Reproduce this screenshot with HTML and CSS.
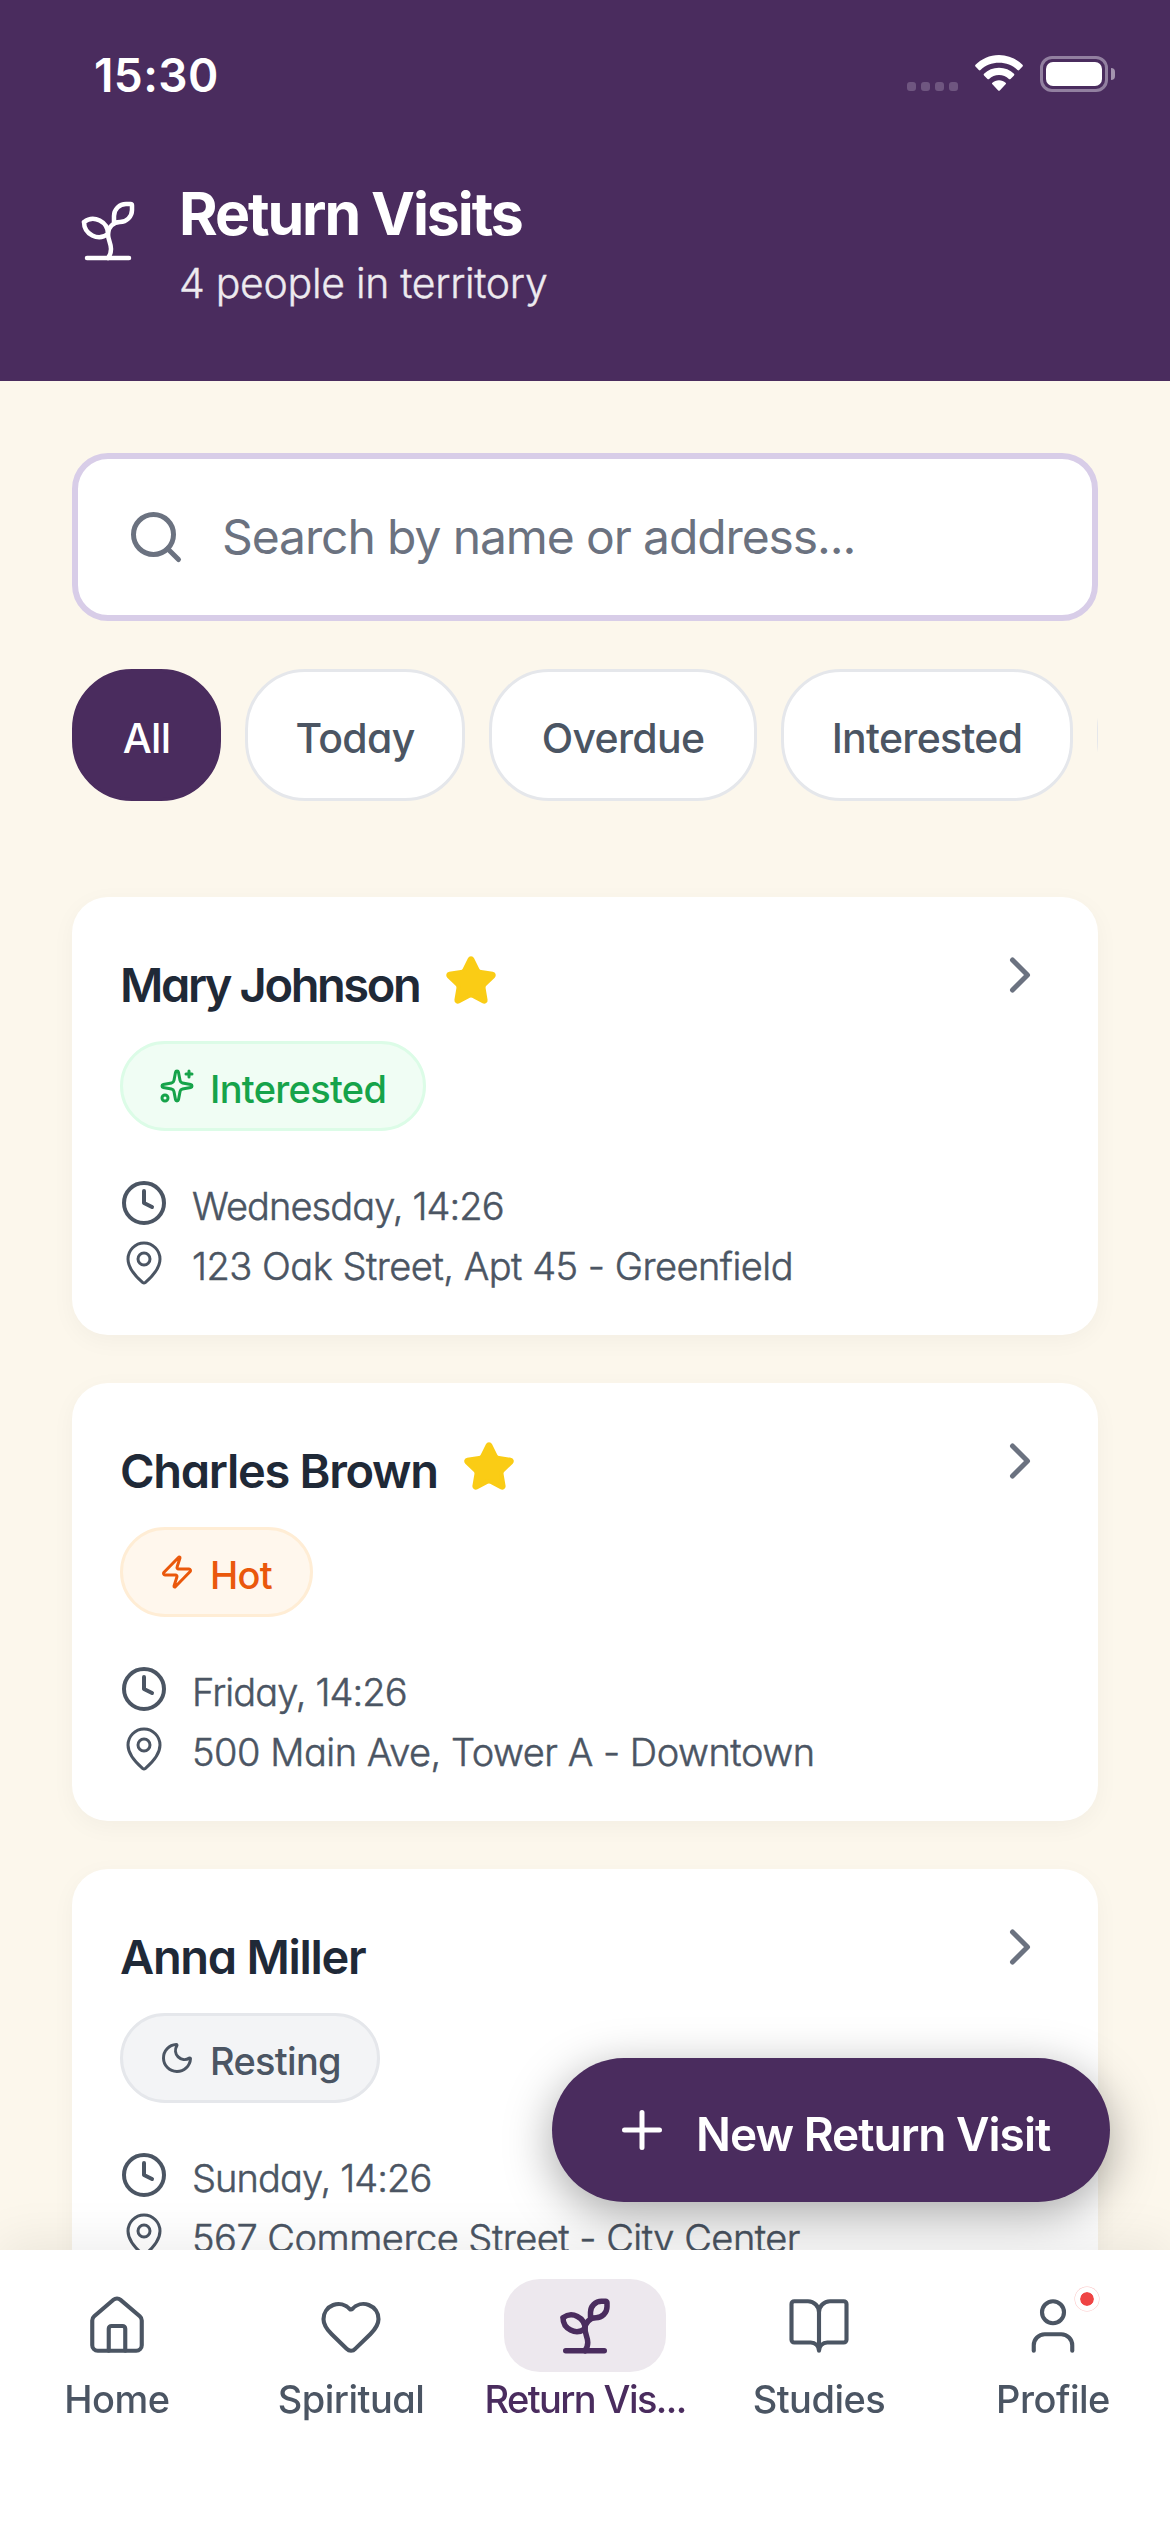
FILE: index.html
```html
<!DOCTYPE html>
<html lang="en">
<head>
    <meta charset="UTF-8">
    <title>Return Visits</title>
    <link rel="stylesheet" href="styles.css">
</head>

<body>
    <!-- icons -->
    <svg class="sprite" width="0" height="0">
        <symbol id="sprout" viewBox="0 0 24 24">
            <path d="M14 9.536V7a4 4 0 0 1 4-4h1.5a.5.5 0 0 1 .5.5V5a4 4 0 0 1-4 4 4 4 0 0 0-4 4c0 2 1 3 1 5a5 5 0 0 1-1 3" />
            <path d="M4 9a5 5 0 0 1 8 4 5 5 0 0 1-8-4M5 21h14" />
        </symbol>
        <symbol id="search" viewBox="0 0 24 24">
            <circle cx="11" cy="11" r="8" />
            <path d="m21 21-4.34-4.34" />
        </symbol>
        <symbol id="star" viewBox="0 0 24 24">
            <path d="M11.525 2.295a.53.53 0 0 1 .95 0l2.31 4.679a2.123 2.123 0 0 0 1.595 1.16l5.166.756a.53.53 0 0 1 .294.904l-3.736 3.638a2.123 2.123 0 0 0-.611 1.878l.882 5.14a.53.53 0 0 1-.771.56l-4.618-2.428a2.122 2.122 0 0 0-1.973 0L6.396 21.01a.53.53 0 0 1-.77-.56l.881-5.139a2.122 2.122 0 0 0-.611-1.879L2.16 9.795a.53.53 0 0 1 .294-.906l5.165-.755a2.122 2.122 0 0 0 1.597-1.16z" />
        </symbol>
        <symbol id="chevron" viewBox="0 0 24 24">
            <path d="m9 18 6-6-6-6" />
        </symbol>
        <symbol id="sparkles" viewBox="0 0 24 24">
            <path d="M11.017 2.814a1 1 0 0 1 1.966 0l1.051 5.558a2 2 0 0 0 1.594 1.594l5.558 1.051a1 1 0 0 1 0 1.966l-5.558 1.051a2 2 0 0 0-1.594 1.594l-1.051 5.558a1 1 0 0 1-1.966 0l-1.051-5.558a2 2 0 0 0-1.594-1.594l-5.558-1.051a1 1 0 0 1 0-1.966l5.558-1.051a2 2 0 0 0 1.594-1.594z" />
            <path d="M20 2v4M22 4h-4" />
            <circle cx="4" cy="20" r="2" />
        </symbol>
        <symbol id="zap" viewBox="0 0 24 24">
            <path d="M4 14a1 1 0 0 1-.78-1.63l9.9-10.2a.5.5 0 0 1 .86.46l-1.92 6.02A1 1 0 0 0 13 10h7a1 1 0 0 1 .78 1.63l-9.9 10.2a.5.5 0 0 1-.86-.46l1.92-6.02A1 1 0 0 0 11 14z" />
        </symbol>
        <symbol id="moon" viewBox="0 0 24 24">
            <path d="M20.985 12.486a9 9 0 1 1-9.473-9.472c.405-.022.617.46.402.803a6 6 0 0 0 8.268 8.268c.344-.215.825-.004.803.401" />
        </symbol>
        <symbol id="clock" viewBox="0 0 24 24">
            <circle cx="12" cy="12" r="10" />
            <path d="M12 6v6l4 2" />
        </symbol>
        <symbol id="pin" viewBox="0 0 24 24">
            <path d="M20 10c0 4.993-5.539 10.193-7.399 11.799a1 1 0 0 1-1.202 0C9.539 20.193 4 14.993 4 10a8 8 0 0 1 16 0" />
            <circle cx="12" cy="10" r="3" />
        </symbol>
        <symbol id="plus" viewBox="0 0 24 24">
            <path d="M5 12h14M12 5v14" />
        </symbol>
        <symbol id="home" viewBox="0 0 24 24">
            <path d="M15 21v-8a1 1 0 0 0-1-1h-4a1 1 0 0 0-1 1v8" />
            <path d="M3 10a2 2 0 0 1 .709-1.528l7-5.999a2 2 0 0 1 2.582 0l7 5.999A2 2 0 0 1 21 10v9a2 2 0 0 1-2 2H5a2 2 0 0 1-2-2z" />
        </symbol>
        <symbol id="heart" viewBox="0 0 24 24">
            <path d="M2 9.5a5.5 5.5 0 0 1 9.591-3.676.56.56 0 0 0 .818 0A5.49 5.49 0 0 1 22 9.5c0 2.29-1.5 4-3 5.5l-5.492 5.313a2 2 0 0 1-3 .019L5 15c-1.5-1.5-3-3.2-3-5.5" />
        </symbol>
        <symbol id="book" viewBox="0 0 24 24">
            <path d="M12 7v14M3 18a1 1 0 0 1-1-1V4a1 1 0 0 1 1-1h5a4 4 0 0 1 4 4 4 4 0 0 1 4-4h5a1 1 0 0 1 1 1v13a1 1 0 0 1-1 1h-6a3 3 0 0 0-3 3 3 3 0 0 0-3-3z" />
        </symbol>
        <symbol id="user" viewBox="0 0 24 24">
            <path d="M19 21v-2a4 4 0 0 0-4-4H9a4 4 0 0 0-4 4v2" />
            <circle cx="12" cy="7" r="4" />
        </symbol>
    </svg>

    <header class="header">
        <div class="status">
            <span class="time">15:30</span>
            <div class="status-icons">
                <div class="dots"><i></i><i></i><i></i><i></i></div>
                <svg class="wifi" viewBox="0 0 48 36">
                    <path d="M24 0C14.500 0 6.500 4 .5 9.800q-.8.900 0 1.800L3.800 15q.8.800 1.700 0C10.500 10.300 17 7.800 24 7.800s13.500 2.500 18.500 7.200q.9.800 1.700 0l3.300-3.400q.8-.9 0-1.800C41.500 4 33.500 0 24 0z" />
                    <path d="M24 12.800c-6 0-11 2.300-15 5.900q-.8.800 0 1.700l3.500 3.500q.8.700 1.600 0c2.700-2.400 6-3.900 9.900-3.900s7.200 1.500 9.900 3.900q.8.700 1.600 0l3.500-3.500q.8-.9 0-1.700c-4-3.600-9-5.900-15-5.900z" />
                    <path d="M24 25.300c-2.600 0-4.900 1-6.600 2.500q-.8.700 0 1.500l5.800 6.100q.8.700 1.600 0l5.800-6.100q.8-.8 0-1.500c-1.700-1.500-4-2.500-6.600-2.500z" />
                </svg>
                <div class="battery"><div class="level"></div></div>
            </div>
        </div>
        <div class="title">
            <svg class="icon"><use href="#sprout" /></svg>
            <div>
                <h1>Return Visits</h1>
                <p>4 people in territory</p>
            </div>
        </div>
    </header>

    <main class="content">
        <div class="search">
            <svg class="icon"><use href="#search" /></svg>
            <span>Search by name or address...</span>
        </div>

        <ul class="filters">
            <li class="all active">All</li>
            <li class="today">Today</li>
            <li class="overdue">Overdue</li>
            <li class="interest">Interested</li>
            <li class="more"></li>
        </ul>

        <ul class="cards">
            <li class="card">
                <div class="card-head">
                    <h2 class="mary">Mary Johnson</h2>
                    <svg class="icon star"><use href="#star" /></svg>
                    <svg class="icon chevron"><use href="#chevron" /></svg>
                </div>
                <div class="badge interested">
                    <svg class="icon"><use href="#sparkles" /></svg>
                    <span>Interested</span>
                </div>
                <div class="row date">
                    <svg class="icon"><use href="#clock" /></svg>
                    <span>Wednesday, 14:26</span>
                </div>
                <div class="row place">
                    <svg class="icon"><use href="#pin" /></svg>
                    <span>123 Oak Street, Apt 45 - Greenfield</span>
                </div>
            </li>
            <li class="card">
                <div class="card-head">
                    <h2 class="charles">Charles Brown</h2>
                    <svg class="icon star"><use href="#star" /></svg>
                    <svg class="icon chevron"><use href="#chevron" /></svg>
                </div>
                <div class="badge hot">
                    <svg class="icon"><use href="#zap" /></svg>
                    <span>Hot</span>
                </div>
                <div class="row date">
                    <svg class="icon"><use href="#clock" /></svg>
                    <span>Friday, 14:26</span>
                </div>
                <div class="row place">
                    <svg class="icon"><use href="#pin" /></svg>
                    <span>500 Main Ave, Tower A - Downtown</span>
                </div>
            </li>
            <li class="card">
                <div class="card-head">
                    <h2 class="anna">Anna Miller</h2>
                    <svg class="icon chevron"><use href="#chevron" /></svg>
                </div>
                <div class="badge resting">
                    <svg class="icon"><use href="#moon" /></svg>
                    <span>Resting</span>
                </div>
                <div class="row date">
                    <svg class="icon"><use href="#clock" /></svg>
                    <span>Sunday, 14:26</span>
                </div>
                <div class="row place">
                    <svg class="icon"><use href="#pin" /></svg>
                    <span>567 Commerce Street - City Center</span>
                </div>
            </li>
        </ul>
    </main>

    <a class="fab">
        <svg class="icon"><use href="#plus" /></svg>
        <span>New Return Visit</span>
    </a>

    <nav class="tabs">
        <a class="tab">
            <div class="pill"><svg class="icon"><use href="#home" /></svg></div>
            <span>Home</span>
        </a>
        <a class="tab">
            <div class="pill"><svg class="icon"><use href="#heart" /></svg></div>
            <span>Spiritual</span>
        </a>
        <a class="tab active">
            <div class="pill"><svg class="icon"><use href="#sprout" /></svg></div>
            <span>Return Vis...</span>
        </a>
        <a class="tab">
            <div class="pill"><svg class="icon"><use href="#book" /></svg></div>
            <span>Studies</span>
        </a>
        <a class="tab">
            <div class="pill"><svg class="icon"><use href="#user" /></svg><i class="dot"></i></div>
            <span>Profile</span>
        </a>
    </nav>
</body>

</html>
```
FILE: styles.css
```css
* {
    box-sizing: border-box;
}

body,
h1,
h2,
ul,
p {
    margin: 0;
    padding: 0;
}

ul {
    list-style: none;
}

body {
    height: 2532px;
    overflow: hidden;
    background: #fcf7ec;
    color: #4b5563;
    font-family: Inter, "Liberation Sans", sans-serif;
    /* single-storey a */
    font-feature-settings: "cv11";
    white-space: nowrap;
}

.sprite {
    position: absolute;
}

.icon {
    flex: none;
    display: block;
    fill: none;
    stroke: currentColor;
    stroke-width: 2;
    stroke-linecap: round;
    stroke-linejoin: round;
}

/* header */
.header {
    height: 381px;
    background: #4a2c5e;
    color: #fff;
}

.status {
    display: flex;
    justify-content: space-between;
    height: 176px;
    padding: 47px 55px 0 94px;
}

.time {
    font-size: 46px;
    line-height: 56px;
    font-weight: 600;
    letter-spacing: 0.4px;
}

.status-icons {
    display: flex;
    align-items: flex-start;
    padding-top: 8px;
}

.dots {
    display: flex;
    gap: 5px;
    margin: 27px 17px 0 0;
}

.dots i {
    width: 9px;
    height: 9px;
    border-radius: 3px;
    background: #6f5680;
}

.wifi {
    width: 48px;
    height: 36px;
    margin-right: 17px;
    fill: #fff;
}

.battery {
    position: relative;
    width: 68px;
    height: 36px;
    margin: 1px 7px 0 0;
    padding: 3px;
    border: 3px solid #9280a0;
    border-radius: 12px;
}

.battery::after {
    position: absolute;
    content: "";
    top: 9px;
    right: -10px;
    width: 4px;
    height: 12px;
    border-radius: 0 4px 4px 0;
    background: #a494af;
}

.level {
    height: 100%;
    border-radius: 7px;
    background: #fff;
}

.title {
    display: flex;
    gap: 35px;
    padding-left: 72px;
}

.title .icon {
    width: 72px;
    height: 72px;
    margin-top: 19px;
    stroke-width: 1.5;
}

.title h1 {
    padding-top: 2px;
    font-size: 59px;
    line-height: 72px;
    letter-spacing: -2.1px;
}

.title p {
    margin-top: 5px;
    font-size: 41px;
    line-height: 56px;
    font-weight: 300;
    letter-spacing: -0.3px;
    -webkit-text-stroke: 0.4px;
    opacity: 0.9;
}

/* search and filters */
.content {
    padding: 72px 72px 0;
}

.search {
    display: flex;
    align-items: center;
    gap: 36px;
    height: 168px;
    padding: 0 0 2px 48px;
    border: 6px solid #d8cde8;
    border-radius: 36px;
    background: #fff;
    color: #6b7280;
    font-size: 48px;
    font-feature-settings: normal;
    letter-spacing: -1.1px;
}

.search .icon {
    width: 60px;
    height: 60px;
    margin-top: 2px;
}

.filters {
    display: flex;
    gap: 24px;
    margin: 48px 0 96px;
    overflow: hidden;
}

.filters li {
    flex: none;
    height: 132px;
    padding-top: 6px;
    border: 3px solid #e5e7eb;
    border-radius: 60px;
    background: #fff;
    font-size: 41px;
    line-height: 120px;
    font-weight: 450;
    letter-spacing: -0.7px;
    text-align: center;
}

.filters .active {
    border-color: #4a2c5e;
    background: #4a2c5e;
    color: #fff;
}

.all {
    width: 149px;
}

.today {
    width: 220px;
}

.overdue {
    width: 268px;
}

.interest {
    width: 292px;
}

.more {
    width: 200px;
}

/* cards */
.cards {
    display: flex;
    flex-direction: column;
    gap: 48px;
}

.card {
    height: 438px;
    padding: 48px;
    border-radius: 36px;
    background: #fff;
    box-shadow: 0 6px 24px rgba(0, 0, 0, 0.04);
}

.card-head {
    display: flex;
    align-items: center;
    height: 72px;
    margin-bottom: 24px;
}

.card h2 {
    padding-top: 8px;
    color: #1f2937;
    font-size: 47px;
    line-height: 60px;
    font-weight: 600;
    letter-spacing: -1.3px;
}

.card .mary {
    width: 324px;
    letter-spacing: -2.4px;
}

.charles {
    width: 342px;
}

.star {
    width: 54px;
    height: 54px;
    color: #facc15;
    fill: #facc15;
}

.chevron {
    width: 60px;
    height: 60px;
    margin: 0 0 auto auto;
    color: #6b7280;
}

.badge {
    display: flex;
    align-items: center;
    gap: 15px;
    width: 306px;
    height: 90px;
    margin-bottom: 48px;
    padding-left: 36px;
    border: 3px solid #dcfce7;
    border-radius: 45px;
    background: #f0fdf4;
    color: #16a34a;
    font-size: 38px;
    font-weight: 450;
    letter-spacing: -0.7px;
}

.badge .icon {
    width: 36px;
    height: 36px;
}

.badge span,
.row span {
    padding-top: 6px;
}

.hot {
    width: 193px;
    border-color: #ffedd5;
    background: #fff7ed;
    color: #ea580c;
}

.resting {
    width: 260px;
    border-color: #e5e7eb;
    background: #f3f4f6;
    color: #4b5563;
}

.row {
    display: flex;
    align-items: center;
    gap: 24px;
    height: 48px;
    margin-bottom: 12px;
    font-size: 38px;
    font-weight: 300;
}

.row span {
    -webkit-text-stroke: 0.5px;
}

.row .icon {
    width: 48px;
    height: 48px;
}

.date {
    letter-spacing: -0.9px;
}

.place {
    letter-spacing: -0.5px;
}

.place .icon {
    stroke-width: 1.5;
}

/* floating button */
.fab {
    position: fixed;
    right: 60px;
    bottom: 330px;
    display: flex;
    align-items: center;
    gap: 24px;
    width: 558px;
    height: 144px;
    padding-left: 60px;
    border-radius: 72px;
    background: #4a2c5e;
    box-shadow: 0 12px 48px rgba(0, 0, 0, 0.35);
    color: #fff;
    font-size: 46px;
    font-weight: 600;
    letter-spacing: -1px;
}

.fab span {
    padding-top: 7px;
}

.fab .icon {
    width: 60px;
    height: 60px;
}

/* bottom tabs */
.tabs {
    position: fixed;
    left: 0;
    bottom: 0;
    display: flex;
    width: 1170px;
    height: 282px;
    padding-top: 29px;
    background: #fff;
    box-shadow: 0 -6px 48px rgba(0, 0, 0, 0.08);
}

.tab {
    flex: 1;
    display: flex;
    flex-direction: column;
    align-items: center;
    font-size: 38px;
    line-height: 52px;
    font-weight: 450;
    letter-spacing: -0.5px;
}

.tab span {
    margin-top: 1px;
}

.pill {
    position: relative;
    display: flex;
    align-items: center;
    justify-content: center;
    width: 162px;
    height: 93px;
    border-radius: 36px;
}

.pill .icon {
    width: 66px;
    height: 66px;
    stroke-width: 1.5;
}

.tab.active {
    color: #4a2c5e;
    font-weight: 500;
    letter-spacing: -1.6px;
}

.active .pill {
    background: #ede8ee;
}

.active .pill .icon {
    stroke-width: 2;
}

.dot {
    position: absolute;
    top: 8px;
    right: 35px;
    width: 24px;
    height: 24px;
    border: 5px solid #fff;
    border-radius: 50%;
    background: #ef4444;
    background-clip: padding-box;
    box-shadow: 0 0 0 0.5px #fbc4c4;
}
```
